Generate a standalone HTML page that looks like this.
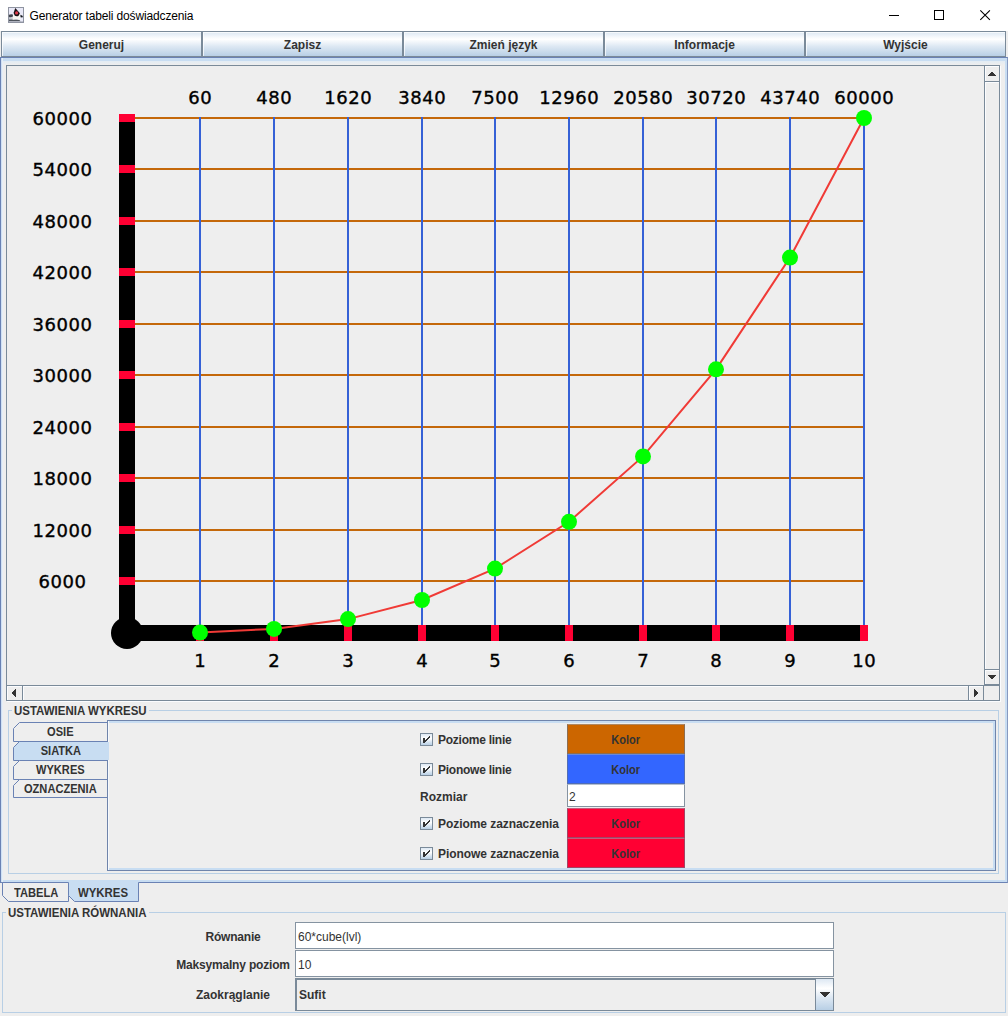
<!DOCTYPE html>
<html lang="pl">
<head>
<meta charset="utf-8">
<title>Generator tabeli doświadczenia</title>
<style>
html,body{margin:0;padding:0;}
body{width:1008px;height:1016px;position:relative;overflow:hidden;background:#eeeeee;font-family:"Liberation Sans",sans-serif;font-size:12px;color:#333;}
.abs{position:absolute;}
div{box-sizing:border-box;}
#titlebar{left:0;top:0;width:1008px;height:31px;background:#fff;}
#title{left:29.5px;top:8px;letter-spacing:-0.14px;font-size:12px;color:#000;white-space:nowrap;line-height:16px;}
.tbtn{top:31px;height:26px;width:201px;border:1px solid #7a8a99;text-align:center;font-weight:bold;line-height:26px;color:#333;
 background:linear-gradient(#dde8f3 0%,#ffffff 30%,#ffffff 30%,#dde8f3 60%,#b8cfe5 100%);box-shadow:inset 1px 1px 0 rgba(255,255,255,.7);}
.chart{position:absolute;left:7px;top:66px;}
.lbl text{font-family:"DejaVu Sans",sans-serif;font-size:18px;fill:#000;stroke:#000;stroke-width:0.38px;letter-spacing:0.5px;}

.sbline{background:#7a8a99;}
.hl{background:#fbfcfe;}
.tab{left:13px;width:95px;height:20px;text-align:center;font-weight:bold;line-height:18px;}
.tab span{display:inline-block;transform:scaleX(0.925);}
.sx{display:inline-block;transform-origin:0 50%;}
.ttl{font-weight:bold;background:#eeeeee;white-space:nowrap;line-height:14px;height:14px;}
.cb{width:13px;height:13px;border:1px solid #7a8a99;background:linear-gradient(#dde8f3,#fff 40%,#b8cfe5);}
.lab{font-weight:bold;white-space:nowrap;line-height:14px;}
.cbtn{left:567px;width:118px;height:30px;border:1px solid rgba(100,115,135,0.6);border-top-color:rgba(150,165,185,0.55);text-align:center;font-weight:bold;line-height:30px;}
.tf{border:1px solid #8593a1;background:#fff;white-space:nowrap;}
b,.b{font-weight:bold;}
</style>
</head>
<body>
<div id="titlebar" class="abs"></div>
<div id="title" class="abs">Generator tabeli doświadczenia</div>
<svg class="abs" style="left:880px;top:0" width="128" height="31" viewBox="880 0 128 31"><g stroke="#000" stroke-width="1" fill="none"><path d="M889 15.5H899"/><rect x="934.5" y="10.5" width="9" height="9"/><path d="M980.3 10.3L989.9 19.9M989.9 10.3L980.3 19.9" stroke-width="1.1"/></g></svg>
<svg class="abs" style="left:8px;top:7px" width="16" height="16" viewBox="0 0 16 16"><rect x="0.5" y="0.5" width="15" height="15" fill="#e9e9f7" stroke="#8f94a1"/><path d="M1 10.2H5V12.6H1z" fill="#c4c8d0"/><path d="M1 12.6H9.4Q11.6 12.8 12.8 14.6H1z" fill="#4e545c"/><path d="M1 14.2H15V15H1z" fill="#b4b8c4"/><path d="M5 7.4Q8.5 9.6 11.8 6.8L12.5 12.9Q8 11.5 4.6 12.7z" fill="#f7f7f3"/><path d="M7.3 0.9L11.9 6.3L10.4 8.9Q8.4 9.7 6.6 8.6L5.6 5.8z" fill="#1a1014"/><circle cx="8.6" cy="5.9" r="1.6" fill="#de3c4c"/><path d="M0.9 7.8Q3 6.9 4.8 7.5L5 9.6Q2.6 10.6 0.9 10z" fill="#40464e"/><path d="M12.4 7.7L14.9 8.9L14.4 10.6L12.6 10.2z" fill="#14181c"/></svg>

<div class="abs tbtn" style="left:1px">Generuj</div>
<div class="abs tbtn" style="left:202px">Zapisz</div>
<div class="abs tbtn" style="left:403px">Zmień język</div>
<div class="abs tbtn" style="left:604px">Informacje</div>
<div class="abs tbtn" style="left:805px">Wyjście</div>

<!-- tabbed pane content border -->
<div class="abs" id="tpc" style="left:0;top:57px;width:1008px;height:826px;border:1px solid #6a82b4;border-right-color:#8799bf;background:#eeeeee;box-shadow:inset 1px 0 0 #cfe0f3, inset 2px 0 0 #e6eef7, inset 0 3px 0 #c8ddf2, inset -2px -2px 0 #c8ddf2;"></div>
<div class="abs" style="left:3px;top:61px;width:1002px;height:4px;background:linear-gradient(#e2ecf4,#eeeeee)"></div>

<!-- scroll pane -->
<div class="abs" id="sp" style="left:6px;top:65px;width:994px;height:636px;border:1px solid #7a8a99;background:#eeeeee;"></div>
<svg class="chart" width="977" height="619" viewBox="7 66 977 619">
<rect x="135" y="117" width="729" height="2" fill="#c4680a"/>
<rect x="135" y="168" width="729" height="2" fill="#c4680a"/>
<rect x="135" y="220" width="729" height="2" fill="#c4680a"/>
<rect x="135" y="271" width="729" height="2" fill="#c4680a"/>
<rect x="135" y="323" width="729" height="2" fill="#c4680a"/>
<rect x="135" y="374" width="729" height="2" fill="#c4680a"/>
<rect x="135" y="426" width="729" height="2" fill="#c4680a"/>
<rect x="135" y="477" width="729" height="2" fill="#c4680a"/>
<rect x="135" y="529" width="729" height="2" fill="#c4680a"/>
<rect x="135" y="580" width="729" height="2" fill="#c4680a"/>
<rect x="199" y="117" width="2" height="509" fill="#3561d6"/>
<rect x="273" y="117" width="2" height="509" fill="#3561d6"/>
<rect x="347" y="117" width="2" height="509" fill="#3561d6"/>
<rect x="421" y="117" width="2" height="509" fill="#3561d6"/>
<rect x="494" y="117" width="2" height="509" fill="#3561d6"/>
<rect x="568" y="117" width="2" height="509" fill="#3561d6"/>
<rect x="642" y="117" width="2" height="509" fill="#3561d6"/>
<rect x="715" y="117" width="2" height="509" fill="#3561d6"/>
<rect x="789" y="117" width="2" height="509" fill="#3561d6"/>
<rect x="863" y="117" width="2" height="509" fill="#3561d6"/>
<rect x="119" y="114" width="16" height="527" fill="#000"/>
<rect x="119" y="625" width="749" height="16" fill="#000"/>
<circle cx="127" cy="633" r="16" fill="#000"/>
<rect x="119" y="114" width="16" height="8" fill="#ff0033"/>
<rect x="119" y="165" width="16" height="8" fill="#ff0033"/>
<rect x="119" y="217" width="16" height="8" fill="#ff0033"/>
<rect x="119" y="268" width="16" height="8" fill="#ff0033"/>
<rect x="119" y="320" width="16" height="8" fill="#ff0033"/>
<rect x="119" y="371" width="16" height="8" fill="#ff0033"/>
<rect x="119" y="423" width="16" height="8" fill="#ff0033"/>
<rect x="119" y="474" width="16" height="8" fill="#ff0033"/>
<rect x="119" y="526" width="16" height="8" fill="#ff0033"/>
<rect x="119" y="577" width="16" height="8" fill="#ff0033"/>
<rect x="196" y="625" width="8" height="16" fill="#ff0033"/>
<rect x="270" y="625" width="8" height="16" fill="#ff0033"/>
<rect x="344" y="625" width="8" height="16" fill="#ff0033"/>
<rect x="418" y="625" width="8" height="16" fill="#ff0033"/>
<rect x="491" y="625" width="8" height="16" fill="#ff0033"/>
<rect x="565" y="625" width="8" height="16" fill="#ff0033"/>
<rect x="639" y="625" width="8" height="16" fill="#ff0033"/>
<rect x="712" y="625" width="8" height="16" fill="#ff0033"/>
<rect x="786" y="625" width="8" height="16" fill="#ff0033"/>
<rect x="860" y="625" width="8" height="16" fill="#ff0033"/>
<polyline points="200,632.5 274,628.9 348,619.1 422,600.0 495,568.6 569,521.8 643,456.4 716,369.3 790,257.6 864,118.0" fill="none" stroke="#f03a36" stroke-width="2"/>
<circle cx="200" cy="632.5" r="8" fill="#00ff00"/>
<circle cx="274" cy="628.9" r="8" fill="#00ff00"/>
<circle cx="348" cy="619.1" r="8" fill="#00ff00"/>
<circle cx="422" cy="600.0" r="8" fill="#00ff00"/>
<circle cx="495" cy="568.6" r="8" fill="#00ff00"/>
<circle cx="569" cy="521.8" r="8" fill="#00ff00"/>
<circle cx="643" cy="456.4" r="8" fill="#00ff00"/>
<circle cx="716" cy="369.3" r="8" fill="#00ff00"/>
<circle cx="790" cy="257.6" r="8" fill="#00ff00"/>
<circle cx="864" cy="118.0" r="8" fill="#00ff00"/>
<g class="lbl" text-anchor="middle">
<text x="200.25" y="104">60</text>
<text x="274.25" y="104">480</text>
<text x="348.25" y="104">1620</text>
<text x="422.25" y="104">3840</text>
<text x="495.25" y="104">7500</text>
<text x="569.25" y="104">12960</text>
<text x="643.25" y="104">20580</text>
<text x="716.25" y="104">30720</text>
<text x="790.25" y="104">43740</text>
<text x="864.25" y="104">60000</text>
<text x="200.25" y="667">1</text>
<text x="274.25" y="667">2</text>
<text x="348.25" y="667">3</text>
<text x="422.25" y="667">4</text>
<text x="495.25" y="667">5</text>
<text x="569.25" y="667">6</text>
<text x="643.25" y="667">7</text>
<text x="716.25" y="667">8</text>
<text x="790.25" y="667">9</text>
<text x="864.25" y="667">10</text>
<text x="62.5" y="125">60000</text>
<text x="62.5" y="176">54000</text>
<text x="62.5" y="228">48000</text>
<text x="62.5" y="279">42000</text>
<text x="62.5" y="331">36000</text>
<text x="62.5" y="382">30000</text>
<text x="62.5" y="434">24000</text>
<text x="62.5" y="485">18000</text>
<text x="62.5" y="537">12000</text>
<text x="62.5" y="588">6000</text>
</g>
</svg>

<!-- scrollbars -->
<div class="abs sbline" style="left:984px;top:66px;width:1px;height:619px"></div>
<div class="abs sbline" style="left:984px;top:81px;width:15px;height:1px"></div>
<div class="abs sbline" style="left:984px;top:669px;width:15px;height:1px"></div>
<div class="abs sbline" style="left:984px;top:684px;width:15px;height:1px"></div>
<div class="abs sbline" style="left:7px;top:685px;width:992px;height:1px"></div>
<div class="abs sbline" style="left:22px;top:685px;width:1px;height:15px"></div>
<div class="abs sbline" style="left:968px;top:685px;width:1px;height:15px"></div>
<div class="abs sbline" style="left:983px;top:685px;width:1px;height:15px"></div>

<!-- settings titled border -->
<div class="abs" style="left:8px;top:710px;width:991px;height:164px;border:1px solid #b8cfe5;"></div>
<div class="abs ttl" style="left:12px;top:704px;width:137px;padding:0 0 0 2px;"><span class="sx" style="transform:scaleX(0.956)">USTAWIENIA WYKRESU</span></div>

<!-- left tabs -->
<svg class="abs" style="left:12px;top:720px" width="100" height="82" viewBox="12 720 100 82">
<path d="M13.5 741.5V728.5L19.5 722.5H107.5V741.5z" fill="#eeeeee" stroke="#6a82b4"/>
<path d="M13.5 760.5V747.5L19.5 741.5H109V760.5z" fill="#c8ddf2"/><path d="M107.5 760.5H13.5V747.5L19.5 741.5H107.5" fill="none" stroke="#6a82b4"/>
<path d="M13.5 779.5V766.5L19.5 760.5H107.5V779.5z" fill="#eeeeee" stroke="#6a82b4"/>
<path d="M13.5 797.5V785.5L19.5 779.5H107.5V797.5z" fill="#eeeeee" stroke="#6a82b4"/>
</svg>
<div class="abs" style="left:107px;top:720px;width:889px;height:151px;border:1px solid #6f84ab;box-shadow:inset 1px 0 0 #f6f9fd, inset 0 2px 0 #c8ddf2, inset -2px -2px 0 #c8ddf2;"></div>
<div class="abs" style="left:107px;top:742px;width:2px;height:18px;background:#c8ddf2"></div>
<div class="abs tab" style="top:723px"><span>OSIE</span></div>
<div class="abs tab" style="top:742px"><span>SIATKA</span></div>
<div class="abs tab" style="top:761px"><span>WYKRES</span></div>
<div class="abs tab" style="top:780px"><span>OZNACZENIA</span></div>

<!-- siatka controls -->
<div class="abs cb" style="left:420px;top:733px"></div>
<div class="abs cb" style="left:420px;top:763px"></div>
<div class="abs cb" style="left:420px;top:817px"></div>
<div class="abs cb" style="left:420px;top:847px"></div>
<svg class="abs" style="left:420px;top:733px" width="13" height="130"><g fill="#333" shape-rendering="crispEdges"><g transform="translate(0 0)"><rect x="3" y="5" width="2" height="5"/><rect x="5" y="7" width="1" height="2"/><rect x="6" y="6" width="1" height="2"/><rect x="7" y="5" width="1" height="2"/><rect x="8" y="4" width="1" height="2"/><rect x="9" y="3" width="1" height="2"/></g><g transform="translate(0 30)"><rect x="3" y="5" width="2" height="5"/><rect x="5" y="7" width="1" height="2"/><rect x="6" y="6" width="1" height="2"/><rect x="7" y="5" width="1" height="2"/><rect x="8" y="4" width="1" height="2"/><rect x="9" y="3" width="1" height="2"/></g><g transform="translate(0 84)"><rect x="3" y="5" width="2" height="5"/><rect x="5" y="7" width="1" height="2"/><rect x="6" y="6" width="1" height="2"/><rect x="7" y="5" width="1" height="2"/><rect x="8" y="4" width="1" height="2"/><rect x="9" y="3" width="1" height="2"/></g><g transform="translate(0 114)"><rect x="3" y="5" width="2" height="5"/><rect x="5" y="7" width="1" height="2"/><rect x="6" y="6" width="1" height="2"/><rect x="7" y="5" width="1" height="2"/><rect x="8" y="4" width="1" height="2"/><rect x="9" y="3" width="1" height="2"/></g></g></svg>
<div class="abs lab" style="left:438px;top:733px;letter-spacing:-0.25px">Poziome linie</div>
<div class="abs lab" style="left:438px;top:763px;letter-spacing:-0.25px">Pionowe linie</div>
<div class="abs lab" style="left:420px;top:790px">Rozmiar</div>
<div class="abs lab" style="left:438px;top:817px;letter-spacing:-0.06px">Poziome zaznaczenia</div>
<div class="abs lab" style="left:438px;top:847px;letter-spacing:-0.06px">Pionowe zaznaczenia</div>
<div class="abs cbtn" style="top:724px;background:#cc6600"><span style="display:inline-block;transform:scaleX(0.92)">Kolor</span></div>
<div class="abs cbtn" style="top:754px;background:#3366ff"><span style="display:inline-block;transform:scaleX(0.92)">Kolor</span></div>
<div class="abs tf" style="left:567px;top:784px;width:118px;height:23px;line-height:22px;padding:1px 0 0 1px;border-top-color:#b4bfd0">2</div>
<div class="abs cbtn" style="top:808px;background:#ff0033"><span style="display:inline-block;transform:scaleX(0.92)">Kolor</span></div>
<div class="abs cbtn" style="top:838px;background:#ff0033"><span style="display:inline-block;transform:scaleX(0.92)">Kolor</span></div>

<!-- bottom tabs -->
<svg class="abs" style="left:0;top:880px" width="150" height="24" viewBox="0 880 150 24">
<path d="M2.5 882.5V895.5L8.5 901.5H68.5V882.5z" fill="#eeeeee" stroke="#6a82b4"/>
<path d="M68.5 880V895.5L74.5 901.5H138.5V880z" fill="#c8ddf2"/>
<path d="M68.5 882.5V895.5L74.5 901.5H138.5V882.5" fill="none" stroke="#6a82b4"/>
</svg>
<div class="abs lab" style="left:13.5px;top:886px"><span class="sx" style="transform:scaleX(0.93)">TABELA</span></div>
<div class="abs lab" style="left:78px;top:886px"><span class="sx" style="transform:scaleX(0.95)">WYKRES</span></div>

<!-- equation titled border -->
<div class="abs" style="left:2px;top:912px;width:1004px;height:101px;border:1px solid #b8cfe5;"></div>
<div class="abs ttl" style="left:6px;top:906px;width:143px;padding:0 0 0 2.3px;"><span class="sx" style="transform:scaleX(0.957)">USTAWIENIA RÓWNANIA</span></div>
<div class="abs lab" style="left:133px;top:930px;width:200px;text-align:center;letter-spacing:-0.2px">Równanie</div>
<div class="abs lab" style="left:133px;top:958px;width:200px;text-align:center;letter-spacing:-0.18px">Maksymalny poziom</div>
<div class="abs lab" style="left:133px;top:988px;width:200px;text-align:center">Zaokrąglanie</div>
<div class="abs tf" style="left:295px;top:922px;width:539px;height:27px;line-height:27px;padding:1px 0 0 2px">60*cube(lvl)</div>
<div class="abs tf" style="left:295px;top:950px;width:539px;height:27px;line-height:27px;padding:1px 0 0 2px">10</div>
<div class="abs" style="left:295px;top:978px;width:539px;height:33px;border:1px solid #7a8a99;background:#eeeeee;box-shadow:inset 1px 1px 0 #7a8a99;"></div>
<div class="abs" style="left:815px;top:978px;width:19px;height:33px;border:1px solid #7a8a99;background:linear-gradient(#dde8f3 0%,#ffffff 30%,#dde8f3 60%,#b8cfe5 100%);"></div>
<div class="abs lab" style="left:299px;top:988px">Sufit</div>


<div class="abs hl" style="left:7px;top:686px;width:15px;height:1px"></div>
<div class="abs hl" style="left:7px;top:686px;width:1px;height:14px"></div>
<div class="abs hl" style="left:23px;top:686px;width:945px;height:1px"></div>
<div class="abs hl" style="left:23px;top:686px;width:1px;height:14px"></div>
<div class="abs hl" style="left:969px;top:686px;width:14px;height:1px"></div>
<div class="abs hl" style="left:969px;top:686px;width:1px;height:14px"></div>
<div class="abs hl" style="left:985px;top:66px;width:14px;height:1px"></div>
<div class="abs hl" style="left:985px;top:66px;width:1px;height:15px"></div>
<div class="abs hl" style="left:985px;top:82px;width:14px;height:1px"></div>
<div class="abs hl" style="left:985px;top:82px;width:1px;height:587px"></div>
<div class="abs hl" style="left:985px;top:670px;width:14px;height:1px"></div>
<div class="abs hl" style="left:985px;top:670px;width:1px;height:14px"></div>
<div class="abs hl" style="left:7px;top:701px;width:994px;height:1px"></div>
<div class="abs hl" style="left:1000px;top:66px;width:1px;height:636px"></div>
<svg class="abs" style="left:0;top:0;pointer-events:none" width="1008" height="1016"><g fill="#333" shape-rendering="crispEdges"><rect x="990.5" y="72" width="2" height="1"/><rect x="989.5" y="73" width="4" height="1"/><rect x="988.5" y="74" width="6" height="1"/><rect x="987.5" y="75" width="8" height="1"/><rect x="990.5" y="678" width="2" height="1"/><rect x="989.5" y="677" width="4" height="1"/><rect x="988.5" y="676" width="6" height="1"/><rect x="987.5" y="675" width="8" height="1"/><rect x="12" y="692" width="1" height="2"/><rect x="13" y="691" width="1" height="4"/><rect x="14" y="690" width="1" height="6"/><rect x="15" y="689" width="1" height="8"/><rect x="977" y="692" width="1" height="2"/><rect x="976" y="691" width="1" height="4"/><rect x="975" y="690" width="1" height="6"/><rect x="974" y="689" width="1" height="8"/><rect x="819.5" y="992" width="10" height="1"/><rect x="820.5" y="993" width="8" height="1"/><rect x="821.5" y="994" width="6" height="1"/><rect x="822.5" y="995" width="4" height="1"/><rect x="823.5" y="996" width="2" height="1"/></g></svg>
</body>
</html>
